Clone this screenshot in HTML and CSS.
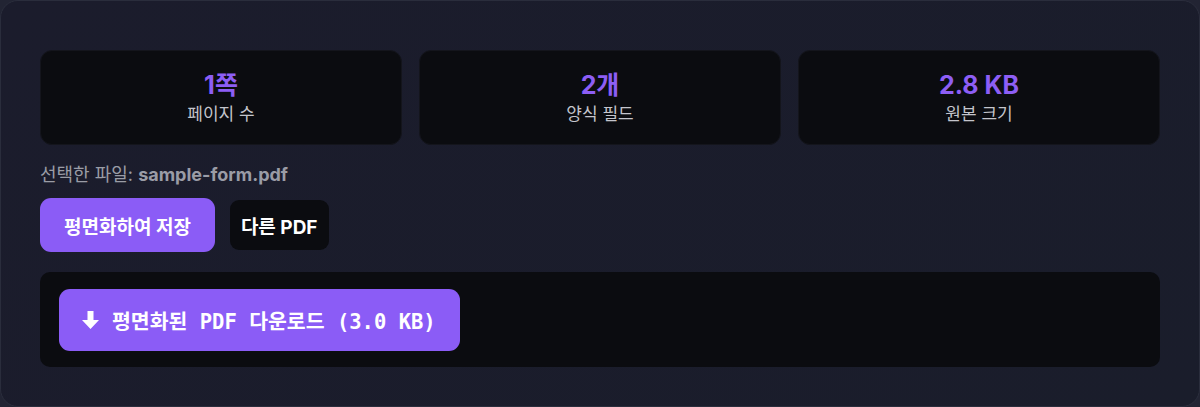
FILE: index.html
```html
<!DOCTYPE html>
<html lang="ko">
<head>
	<meta charset="UTF-8">
	<title>PDF 평면화</title>
	<link rel="stylesheet" href="styles.css">
</head>
<body>

	<main class="panel">
		<div class="stats">
			<div class="stat">
				<p class="stat-value">1쪽</p>
				<p class="stat-label">페이지 수</p>
			</div>
			<div class="stat">
				<p class="stat-value">2개</p>
				<p class="stat-label">양식 필드</p>
			</div>
			<div class="stat">
				<p class="stat-value">2.8 KB</p>
				<p class="stat-label">원본 크기</p>
			</div>
		</div>

		<p class="file-info">선택한 파일: <strong>sample-form.pdf</strong></p>

		<div class="actions">
			<button class="btn btn-primary">평면화하여 저장</button>
			<button class="btn btn-dark">다른 PDF</button>
		</div>

		<div class="result">
			<a class="download" href="#">
				<svg class="download-icon" viewBox="0 0 17 18" aria-hidden="true">
					<path d="M5.5 0h6v9h5.5L8.5 18 0 9h5.5z" fill="#fff"/>
				</svg>
				평면화된 PDF 다운로드 (3.0 KB)
			</a>
		</div>
	</main>

</body>
</html>
```

FILE: styles.css
```css
body {
	margin: 0;
	background-color: #222433;
	font-family: Inter, "Noto Sans CJK KR", sans-serif;
	color: #e5e7eb;
}
.panel {
	box-sizing: border-box;
	height: 407px;
	padding: 49px 39px 39px;
	border: 1px solid #2a2d3c;
	border-radius: 18px;
	background: linear-gradient(135deg, #1b1c2c, #1a1d2b);
	display: flex;
	flex-direction: column;
}
.stats {
	display: grid;
	grid-template-columns: repeat(3, 1fr);
	gap: 17px;
}
.stat {
	height: 95px;
	box-sizing: border-box;
	background-color: #0b0c10;
	border: 1px solid #14151c;
	border-radius: 12px;
	display: flex;
	flex-direction: column;
	align-items: center;
	justify-content: center;
	gap: 3px;
}
.stat p {
	margin: 0;
}
.stat-value {
	font-size: 25px;
	font-weight: 700;
	line-height: 1.2;
	color: #8d5ef5;
}
.stat-label {
	font-size: 17px;
	line-height: 1.3;
	color: #c4c5cc;
}
.file-info {
	margin: 18px 0 0;
	font-size: 18px;
	line-height: 24px;
	color: #9a9ca6;
}
.file-info strong {
	font-weight: 700;
}
.actions {
	margin-top: 11px;
	display: flex;
	align-items: center;
	gap: 15px;
}
.btn {
	font-family: Inter, "Noto Sans CJK KR", sans-serif;
	font-weight: 700;
	color: #fff;
	border: none;
	cursor: pointer;
}
.btn-primary {
	height: 54px;
	padding: 0 24px;
	font-size: 19px;
	border-radius: 11px;
	background-color: #8b5cf6;
}
.btn-dark {
	height: 50px;
	padding: 0 11px;
	font-size: 19px;
	border-radius: 9px;
	background-color: #0b0c10;
}
.result {
	margin-top: 20px;
	padding: 17px 19px 16px;
	background-color: #0b0c10;
	border-radius: 10px;
	display: flex;
}
.download {
	display: inline-flex;
	align-items: center;
	gap: 13px;
	height: 62px;
	padding: 0 24px 0 23px;
	border-radius: 11px;
	background-color: #8b5cf6;
	color: #fff;
	text-decoration: none;
	font-family: "DejaVu Sans Mono", "Noto Sans CJK KR", monospace;
	font-size: 20.5px;
	font-weight: 700;
}
.download-icon {
	width: 17px;
	height: 18px;
	flex-shrink: 0;
}
```
